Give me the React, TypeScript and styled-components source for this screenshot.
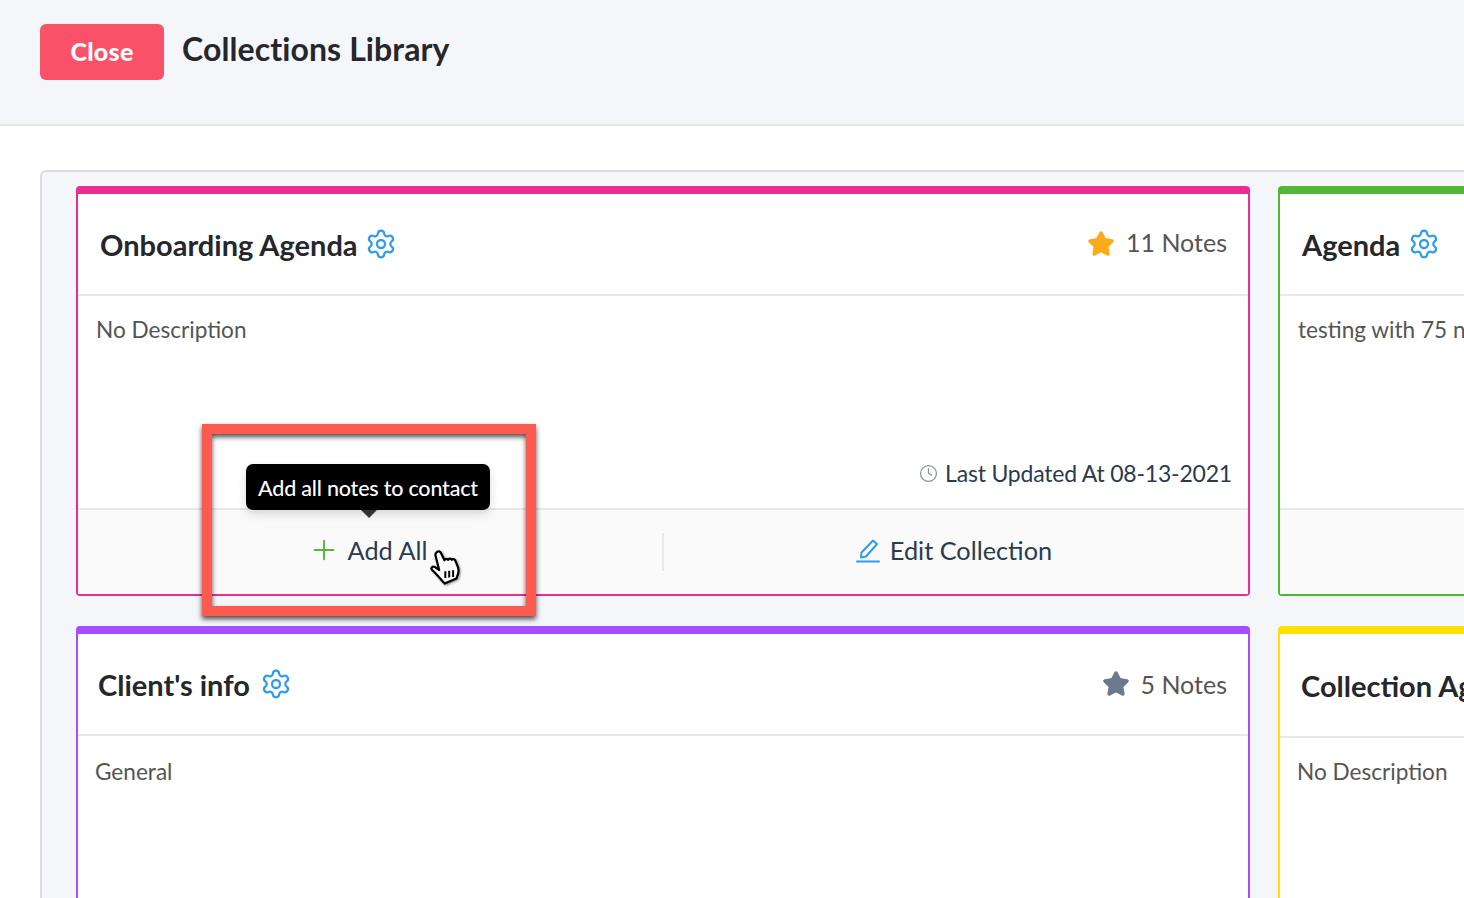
import React from "react";
import styled, { createGlobalStyle } from "styled-components";
import { Plus, Star, Clock, Settings } from "lucide-react";

const Global = createGlobalStyle`
  html, body { margin: 0; padding: 0; background: #fff; }
  body { font-family: "Lato", "Liberation Sans", sans-serif; }
  * { box-sizing: border-box; }
`;

const Page = styled.div`
  position: relative;
  width: 1464px;
  height: 898px;
  overflow: hidden;
  background: #fff;
`;

const TopBar = styled.header`
  height: 126px;
  background: #f5f6fa;
  border-bottom: 2px solid #e6e6e6;
  padding: 24px 40px 0;
  display: flex;
  align-items: flex-start;
  gap: 18px;
`;

const CloseButton = styled.button`
  width: 124px;
  height: 56px;
  border: none;
  border-radius: 6px;
  background: #f95268;
  color: #fff;
  font: 900 25px/54px "Lato", sans-serif;
  letter-spacing: 0.3px;
  padding: 0 0 2px;
`;

const PageTitle = styled.h1`
  margin: 5px 0 0;
  font: 700 32px/40px "Lato", sans-serif;
  color: #25272c;
  letter-spacing: 0.1px;
`;

const Library = styled.section`
  margin: 44px 0 0 40px;
  width: 1500px;
  height: 800px;
  padding: 14px 0 0 34px;
  background: #f5f6fa;
  border: 2px solid #dcdcdc;
  border-right: none;
  border-radius: 6px 0 0 0;
`;

const CardGrid = styled.div`
  display: grid;
  grid-template-columns: 1174px 1174px;
  grid-auto-rows: 410px;
  column-gap: 28px;
  row-gap: 30px;
`;

const Card = styled.article<{ $accent: string }>`
  display: flex;
  flex-direction: column;
  background: #fff;
  border: 2px solid ${(p) => p.$accent};
  border-top-width: 8px;
  border-radius: 4px;
`;

const CardHead = styled.div<{ $inset: number; $height: number }>`
  height: ${(p) => p.$height}px;
  flex: none;
  display: flex;
  align-items: center;
  justify-content: space-between;
  padding: 0 21px 0 ${(p) => p.$inset}px;
  border-bottom: 2px solid #e8e8e8;
`;

const TitleGroup = styled.div<{ $gap: number }>`
  display: flex;
  align-items: center;
  gap: ${(p) => p.$gap}px;
`;

const CardTitle = styled.h2`
  margin: 0;
  padding-top: 2px;
  font: 700 29px/36px "Lato", sans-serif;
  color: #25272c;
  white-space: nowrap;
`;

const Gear = styled(Settings)`
  color: #2f9bef;
  flex: none;
  margin-top: -1px;
`;

const NoteCount = styled.div<{ $fill: string; $lift: number }>`
  display: flex;
  align-items: center;
  gap: 11px;
  font: 400 25px/30px "Lato", sans-serif;
  color: #555;
  white-space: nowrap;
  padding-bottom: ${(p) => p.$lift}px;
  svg { color: ${(p) => p.$fill}; fill: ${(p) => p.$fill}; margin-top: ${(p) => p.$lift - 1}px; }
`;

const CardBody = styled.div<{ $inset: number; $top: number }>`
  flex: 1;
  height: 212px;
  display: flex;
  flex-direction: column;
  justify-content: space-between;
  padding: ${(p) => p.$top}px 16px 20px ${(p) => p.$inset}px;
`;

const Description = styled.p`
  margin: 0;
  font: 400 22.6px/30px "Lato", sans-serif;
  color: #555;
  white-space: nowrap;
`;

const Updated = styled.div`
  align-self: flex-end;
  display: flex;
  align-items: center;
  gap: 7px;
  font: 400 23px/30px "Lato", sans-serif;
  letter-spacing: -0.2px;
  color: #2b3a4f;
  svg { color: #8a94a3; }
`;

const CardFoot = styled.div`
  flex: none;
  height: 86px;
  display: flex;
  align-items: center;
  background: #fafafa;
  border-top: 2px solid #e8e8e8;
`;

const FootAction = styled.div`
  position: relative;
  flex: 1;
  height: 38px;
  display: flex;
  align-items: center;
  justify-content: center;
  padding: 0 5px 4px 0;
  font: 400 25.3px/34px "Lato", sans-serif;
  color: #2b3a4f;
  white-space: nowrap;
  & + & { border-left: 2px solid #e8e8e8; }
`;

const AddIcon = styled(Plus)`
  color: #52b735;
  margin-right: 8px;
`;

const EditIcon = styled.svg`
  color: #2f9bef;
  margin-right: 9px;
`;

const Tooltip = styled.div`
  position: absolute;
  left: 168px;
  top: -69px;
  width: 244px;
  height: 46px;
  background: #000;
  color: #fff;
  border-radius: 7px;
  font: 500 21.5px/48px "Lato", sans-serif;
  letter-spacing: -0.2px;
  text-align: center;
  box-shadow: 0 4px 10px rgba(0, 0, 0, 0.15);
  &::after {
    content: "";
    position: absolute;
    left: 115px;
    top: 100%;
    width: 0;
    height: 0;
    border-top: 8px solid #333;
    border-left: 8px solid transparent;
    border-right: 8px solid transparent;
  }
`;

const Highlight = styled.div`
  position: absolute;
  left: 202px;
  top: 424px;
  width: 334px;
  height: 192px;
  border: 10px solid #fe5a4f;
  box-shadow: 0 3px 5px rgba(0, 0, 0, 0.7), inset 0 3px 5px rgba(0, 0, 0, 0.7);
  pointer-events: none;
`;

const Cursor = styled.svg`
  position: absolute;
  left: 429px;
  top: 548px;
  filter: drop-shadow(1px 1px 1px rgba(0, 0, 0, 0.45));
`;

const PenLineIcon = () => (
  <EditIcon width="26" height="26" viewBox="0 0 26 26" fill="none" stroke="currentColor" strokeWidth="2" strokeLinejoin="round" strokeLinecap="round">
    <path d="M18 3.500 L22 7 L11 19.500 L6 20.500 L6.500 15.500 Z" />
    <path d="M2 24.500 H24" />
  </EditIcon>
);

type Data = {
  accent: string;
  title: string;
  desc: string;
  notes?: string;
  fill?: string;
  lift?: number;
  inset: number;
  gearGap: number;
  bodyInset: number;
  bodyTop: number;
  headH: number;
  showUpdated?: boolean;
  tip?: boolean;
  foot?: boolean;
};

const cards: Data[] = [
  { accent: "#e92d91", title: "Onboarding Agenda", desc: "No Description", notes: "11 Notes", fill: "#fdaa1b", lift: 4, inset: 22, gearGap: 7, bodyInset: 18, bodyTop: 19, headH: 102, showUpdated: true, tip: true, foot: true },
  { accent: "#52b735", title: "Agenda", desc: "testing with 75 notes", inset: 22, gearGap: 8, bodyInset: 18, bodyTop: 19, headH: 102 },
  { accent: "#a64dff", title: "Client's info", desc: "General", notes: "5 Notes", fill: "#6b7a8c", lift: 0, inset: 20, gearGap: 10, bodyInset: 17, bodyTop: 21, headH: 102 },
  { accent: "#ffdf00", title: "Collection Agenda", desc: "No Description", inset: 21, gearGap: 8, bodyInset: 17, bodyTop: 19, headH: 104 },
];

export default function App() {
  return (
    <Page>
      <Global />
      <TopBar>
        <CloseButton>Close</CloseButton>
        <PageTitle>Collections Library</PageTitle>
      </TopBar>
      <Library>
        <CardGrid>
          {cards.map((c) => (
            <Card key={c.title} $accent={c.accent}>
              <CardHead $inset={c.inset} $height={c.headH}>
                <TitleGroup $gap={c.gearGap}>
                  <CardTitle>{c.title}</CardTitle>
                  <Gear size={32} strokeWidth={1.7} />
                </TitleGroup>
                {c.notes && (
                  <NoteCount $fill={c.fill!} $lift={c.lift ?? 0}>
                    <Star size={28} />
                    {c.notes}
                  </NoteCount>
                )}
              </CardHead>
              <CardBody $inset={c.bodyInset} $top={c.bodyTop}>
                <Description>{c.desc}</Description>
                {c.showUpdated && (
                  <Updated>
                    <Clock size={19} strokeWidth={1.6} />
                    Last Updated At 08-13-2021
                  </Updated>
                )}
              </CardBody>
              <CardFoot>
                {c.foot && (
                  <>
                    <FootAction>
                      <AddIcon size={32} strokeWidth={1.4} />
                      Add All
                      {c.tip && <Tooltip>Add all notes to contact</Tooltip>}
                    </FootAction>
                    <FootAction>
                      <PenLineIcon />
                      Edit Collection
                    </FootAction>
                  </>
                )}
              </CardFoot>
            </Card>
          ))}
        </CardGrid>
      </Library>
      <Highlight />
      <Cursor width="36" height="40" viewBox="0 0 32 36">
        <path
          d="M7 3.500c1.400-1 3-.3 3.700 1.200l3 6.300c.3-1.500 2.500-1.700 3.300-.3.300-1.300 2.500-1.600 3.300-.1.500-.9 2.300-1 3 .4l2.300 5.500c1 2.500 1 5 .1 7.500l-1.300 3.500-10.500 4.500-2.300-2.500C9 26 6 23 2.500 19.500c-1.300-1.300.5-3.500 2.300-2.500l4.200 2.800L5.700 7C5.300 5.500 6 4.200 7 3.500z"
          fill="#fff"
          stroke="#000"
          strokeWidth="2"
          strokeLinejoin="round"
        />
        <path d="M14.500 21v6M18 20.500v6M21.500 20v6" stroke="#000" strokeWidth="1.800" fill="none" />
      </Cursor>
    </Page>
  );
}
